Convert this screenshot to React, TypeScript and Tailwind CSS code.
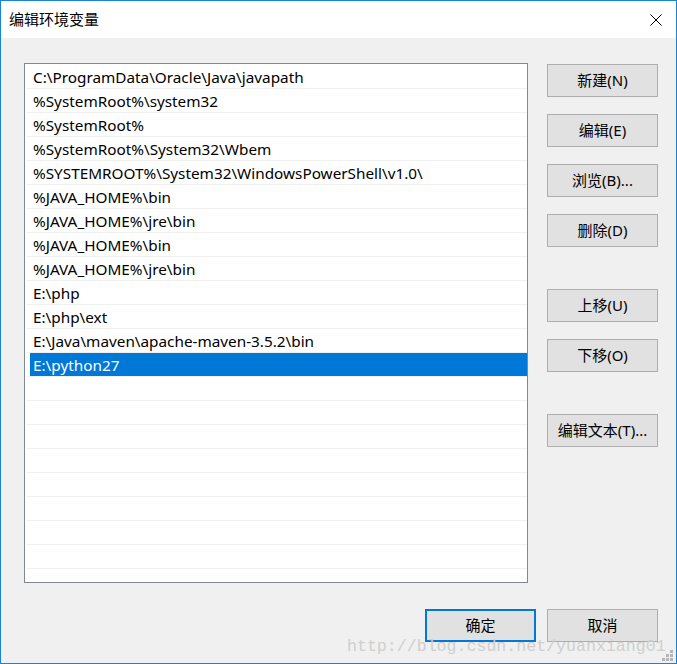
import React from 'react';

const paths = [
  'C:\\ProgramData\\Oracle\\Java\\javapath',
  '%SystemRoot%\\system32',
  '%SystemRoot%',
  '%SystemRoot%\\System32\\Wbem',
  '%SYSTEMROOT%\\System32\\WindowsPowerShell\\v1.0\\',
  '%JAVA_HOME%\\bin',
  '%JAVA_HOME%\\jre\\bin',
  '%JAVA_HOME%\\bin',
  '%JAVA_HOME%\\jre\\bin',
  'E:\\php',
  'E:\\php\\ext',
  'E:\\Java\\maven\\apache-maven-3.5.2\\bin',
  'E:\\python27',
];

const selected = 12;
const totalRows = 22;

function Button({ label, primary = false }: { label: string; primary?: boolean }) {
  return (
    <button
      className={`w-[111px] h-[33px] bg-[#e1e1e1] text-[15px] text-black flex items-center justify-center ${
        primary ? 'border-2 border-[#0078d7]' : 'border border-[#adadad]'
      }`}
    >
      {label}
    </button>
  );
}

export default function App() {
  const rows = Array.from({ length: totalRows }, (_, i) => paths[i] ?? '');

  return (
    <div
      className="relative w-[677px] h-[664px] border border-[#1883d7] bg-[#f0f0f0] flex flex-col overflow-hidden"
      style={{ fontFamily: '"Noto Sans", "Noto Sans CJK SC", sans-serif' }}
    >
      {/* title bar */}
      <div className="h-[37px] bg-white flex items-center justify-between pl-[8px] pr-[14px]">
        <span className="text-[15px] text-black" style={{ fontFamily: '"Noto Sans CJK SC", sans-serif' }}>
          编辑环境变量
        </span>
        <svg width="12" height="12" viewBox="0 0 12 12">
          <path d="M0.5 0.5 L11.5 11.5 M11.5 0.5 L0.5 11.5" stroke="#000" strokeWidth="1" />
        </svg>
      </div>

      <div className="flex pl-[23px] pt-[25px] gap-[19px]">
        {/* list */}
        <div className="w-[504px] h-[520px] border border-[#828790] bg-white pt-[1px] pl-[2px] overflow-hidden">
          {rows.map((text, i) => (
            <div key={i} className="h-[24px] border-b border-[#f0f0f0] flex">
              <div
                className={`ml-[3px] flex-1 pl-[3px] pt-[2px] flex items-center text-[15.3px] leading-none ${
                  i === selected ? 'bg-[#0078d7] text-white' : 'text-black'
                }`}
              >
                {text}
              </div>
            </div>
          ))}
        </div>

        {/* side buttons */}
        <div className="flex flex-col pt-[1px]">
          <div className="flex flex-col gap-[17px]">
            <Button label="新建(N)" />
            <Button label="编辑(E)" />
            <Button label="浏览(B)..." />
            <Button label="删除(D)" />
          </div>
          <div className="flex flex-col gap-[17px] mt-[42px]">
            <Button label="上移(U)" />
            <Button label="下移(O)" />
          </div>
          <div className="mt-[42px]">
            <Button label="编辑文本(T)..." />
          </div>
        </div>
      </div>

      {/* footer */}
      <div className="flex justify-end gap-[11px] pr-[18px] mt-[26px]">
        <Button label="确定" primary />
        <Button label="取消" />
      </div>

      {/* watermark */}
      <div
        className="absolute left-[346px] top-[636px] text-[16.6px] leading-[19px] text-[#cfcfcf] whitespace-nowrap"
        style={{ fontFamily: '"Liberation Mono", monospace' }}
      >
        http://blog.csdn.net/yuanxiang01
      </div>

      {/* resize grip */}
      <svg className="absolute right-[2px] bottom-[1px]" width="12" height="12" viewBox="0 0 12 12">
        <rect x="8" y="0" width="3" height="3" fill="#b5b5b5" />
        <rect x="4" y="4" width="3" height="3" fill="#b5b5b5" />
        <rect x="8" y="4" width="3" height="3" fill="#b5b5b5" />
        <rect x="0" y="8" width="3" height="3" fill="#b5b5b5" />
        <rect x="4" y="8" width="3" height="3" fill="#b5b5b5" />
        <rect x="8" y="8" width="3" height="3" fill="#b5b5b5" />
      </svg>
    </div>
  );
}
